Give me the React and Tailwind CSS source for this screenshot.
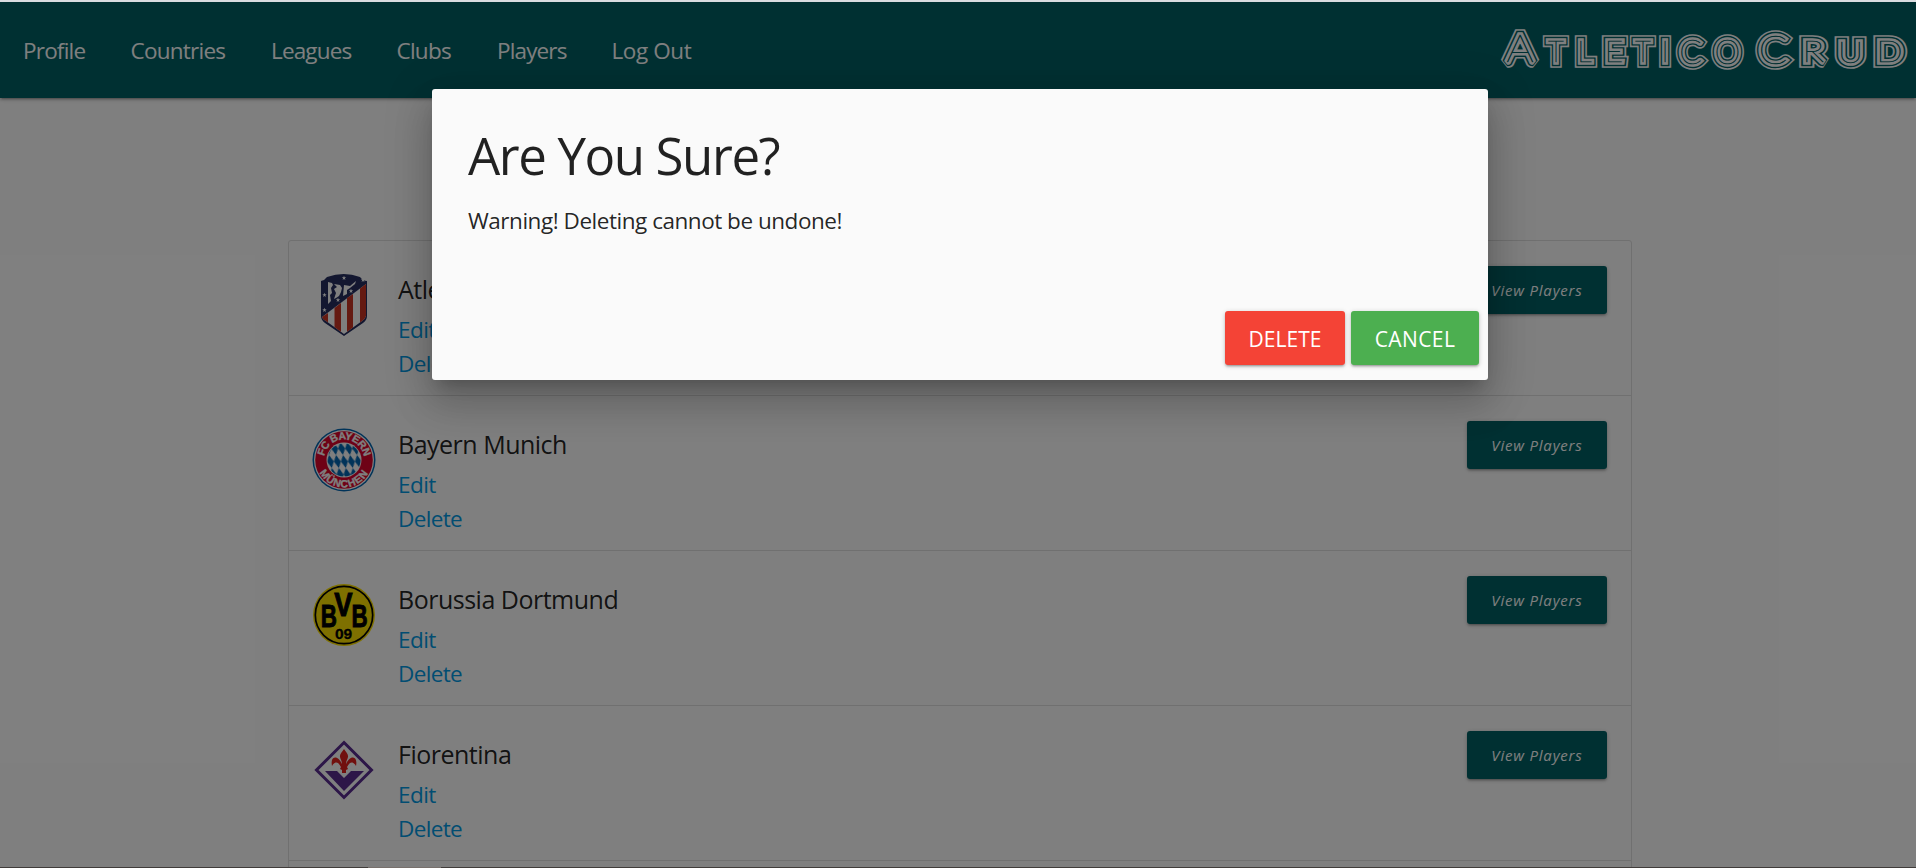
const NAV = [
  { label: "Profile", cls: "w-[62px] tracking-[-0.8px]" },
  { label: "Countries", cls: "w-[95px] tracking-[-0.75px]" },
  { label: "Leagues", cls: "w-[80px] tracking-[-0.85px]" },
  { label: "Clubs", cls: "w-[55px] tracking-[-0.75px]" },
  { label: "Players", cls: "w-[69px] tracking-[-0.85px]" },
  { label: "Log Out", cls: "w-[80px] tracking-[-0.4px]" },
];

// Centre x, baseline, size and horizontal stretch of each letter of the wordmark.
const LETTERS = [
  ["A", 1520, 62, 37, 1.17], ["T", 1556, 62, 29, 0.96], ["L", 1584.5, 62, 29, 1], ["E", 1614, 62, 29, 1.12],
  ["T", 1643, 62, 29, 0.96], ["I", 1665, 62, 29, 1], ["C", 1690.5, 63.5, 33, 1], ["O", 1727.5, 63.5, 33, 1],
  ["C", 1773, 63.5, 40, 1.06], ["R", 1813, 62, 29, 1.27], ["U", 1850.5, 62.5, 29.5, 1.2], ["D", 1889.5, 62, 29, 1.2],
];
const STROKES = [["#ffffff", 11.6], ["#006064", 8.4], ["#ffffff", 5.6], ["#006064", 0.5]];

function Wordmark() {
  return (
    <svg viewBox="1490 2 426 96" className="h-24 w-[426px] font-['Lato'] font-thin">
      {LETTERS.map(([ch, x, y, size, stretch], i) => (
        <g key={i} transform={`translate(${x} ${y}) scale(${stretch} 1)`} textAnchor="middle" fontSize={size} strokeMiterlimit="1.5">
          {STROKES.map(([color, width]) => (
            <text key={width} fill={color} stroke={color} strokeWidth={width}>{ch}</text>
          ))}
        </g>
      ))}
    </svg>
  );
}

const STAR = "M0 -2.3L.6 -.7L2.2 -.7L.9 .3L1.4 1.9L0 .9L-1.4 1.9L-.9 .3L-2.2 -.7L-.6 -.7Z";

function Atletico() {
  return (
    <svg viewBox="0 0 64 64" className="size-16">
      <defs>
        <clipPath id="shield"><path d="M10 9Q14 8 16 5Q32 -2 47 5Q50 9 54 9V43Q53 46 50 48L32 61L14 48Q10 46 10 43Z" /></clipPath>
      </defs>
      <path d="M9 8Q13 7 15 4Q32 -2 48 4Q51 8 55 8V43Q55 47 51 50L32 63L13 50Q9 47 9 43Z" fill="#262f61" />
      <g clipPath="url(#shield)">
        <path d="M10 44L54 11V64H10Z" fill="#fff" />
        <path d="M10 44L16 40V64H10ZM22.500 35L29 30V64H22.500ZM35 25L41 21V64H35ZM48 15.500L54 11V64H48Z" fill="#cb3524" />
      </g>
      <path d="M16 9L20 10L21 12L19 15L20 20L18 22L19 28L16 31ZM22 11L28 12L30 15L29 19L27 23L24 25L22 26L24 20L22 16L25 14ZM32 12L38 13L44 8L43 11L38 15L35 17L35 21L31 23Z" fill="#fff" />
      <g fill="#fff">
        <path d={STAR} transform="translate(32 5)" /><path d={STAR} transform="translate(51 7)" />
        <path d={STAR} transform="translate(39 18)" /><path d={STAR} transform="translate(26 27)" />
        <path d={STAR} transform="translate(12.500 22)" /><path d={STAR} transform="translate(12.500 37)" />
      </g>
    </svg>
  );
}

function Bayern() {
  return (
    <svg viewBox="0 0 64 64" className="size-16 font-['Liberation_Sans'] font-bold">
      <defs>
        <path id="bayern-top" d="M12.500 36A20 20 0 1 1 51.500 36" />
        <path id="bayern-bottom" d="M4.600 32A27.400 27.400 0 0 0 59.400 32" />
        <clipPath id="bayern-core"><circle cx="32" cy="32" r="16.600" /></clipPath>
        <pattern id="lozenge" width="7" height="13" patternUnits="userSpaceOnUse" patternTransform="translate(1 1) skewX(12)">
          <path d="M3.500 0L7 6.500L3.500 13L0 6.500Z" fill="#0066b2" />
        </pattern>
      </defs>
      <circle cx="32" cy="32" r="31.500" fill="#0066b2" />
      <circle cx="32" cy="32" r="30" fill="#fff" />
      <circle cx="32" cy="32" r="28.800" fill="#dc052d" />
      <circle cx="32" cy="32" r="17.500" fill="#fff" />
      <rect width="64" height="64" fill="url(#lozenge)" clipPath="url(#bayern-core)" />
      <g fill="#fff" stroke="#fff" strokeWidth="0.300" fontSize="10.500" textAnchor="middle">
        <text letterSpacing="-0.500"><textPath href="#bayern-top" startOffset="50%">FC BAYERN</textPath></text>
        <text letterSpacing="0.900"><textPath href="#bayern-bottom" startOffset="50%">MÜNCHEN</textPath></text>
      </g>
    </svg>
  );
}

function Dortmund() {
  return (
    <svg viewBox="0 0 64 64" className="size-16 font-['Liberation_Sans'] font-bold">
      <circle cx="32" cy="32" r="31" fill="#fde100" />
      <circle cx="32" cy="32" r="28.700" fill="none" stroke="#000" strokeWidth="1.700" />
      <g textAnchor="middle" stroke="#000" strokeWidth="1">
        <text transform="translate(16.800 43.700) scale(.7 1)" fontSize="32">B</text>
        <text transform="translate(31.500 32.500) scale(.83 1)" fontSize="33">V</text>
        <text transform="translate(47.500 43.700) scale(.7 1)" fontSize="32">B</text>
        <text x="31.500" y="56" fontSize="15.500" strokeWidth="0.300">09</text>
      </g>
    </svg>
  );
}

function Fiorentina() {
  return (
    <svg viewBox="0 0 64 64" className="size-16">
      <path d="M32 4.500L59.500 32L32 59.500L4.500 32Z" fill="#fff" stroke="#5a2d91" strokeWidth="3" />
      <path d="M13 33H25L32 40L39 33H52L32 53Z" fill="#5a2d91" />
      <path d="M32 11C34 14 36.500 16 36 19C35.500 21.500 34 23 34 26C36 22 38 19.500 41 19.500C44 20 45 23 44 28C42.500 25 40 23.500 38 25C36.500 26 36 28 35 29L36 31L34 32V35H30V32L28 31L29 29C28 28 27.500 26 26 25C24 23.500 21.500 25 20 28C19 23 20 20 23 19.500C26 19.500 28 22 30 26C30 23 28.500 21.500 28 19C27.500 16 30 14 32 11Z" fill="#e2211c" />
    </svg>
  );
}

const CLUBS = [
  { name: "Atletico Madrid", Crest: Atletico },
  { name: "Bayern Munich", Crest: Bayern },
  { name: "Borussia Dortmund", Crest: Dortmund },
  { name: "Fiorentina", Crest: Fiorentina },
];

const SHADOW = "shadow-[0_2px_2px_0_rgba(0,0,0,0.14),0_3px_1px_-2px_rgba(0,0,0,0.12),0_1px_5px_0_rgba(0,0,0,0.2)]";

function ClubRow({ name, Crest }) {
  return (
    <li className="flex h-[155px] items-start border-b border-[#e0e0e0] pl-[23px] pr-6">
      <div className="mt-8 shrink-0"><Crest /></div>
      <div className="ml-[22px] grow text-[22.500px] leading-[34px]">
        <div className="mt-[30px] mb-[5px] text-[25px] leading-[37px] tracking-[-0.5px] text-black/87">{name}</div>
        <div className="tracking-[-0.55px] text-[#039be5]">Edit</div>
        <div className="tracking-[-0.65px] text-[#039be5]">Delete</div>
      </div>
      <button className={`mt-[25px] h-12 w-[140px] rounded-[3px] bg-[#006064] text-[15px] italic tracking-[0.8px] text-white ${SHADOW}`}>View Players</button>
    </li>
  );
}

export default function App() {
  return (
    <div className="relative flex h-[868px] w-[1916px] flex-col overflow-hidden bg-white font-['Open_Sans',sans-serif]">
      <div className="h-0.5 shrink-0 bg-white" />
      <header className={`flex h-24 shrink-0 items-center justify-between bg-[#006064] pl-[23px] text-white ${SHADOW}`}>
        <nav className="flex gap-[45.500px] pt-px text-[22.500px]">
          {NAV.map((n) => <a key={n.label} className={`whitespace-nowrap ${n.cls}`}>{n.label}</a>)}
        </nav>
        <Wordmark />
      </header>
      <ul className="ml-[288px] mt-[142px] h-[700px] w-[1344px] rounded-t-[3px] border border-[#e0e0e0]">
        {CLUBS.map((c) => <ClubRow key={c.name} {...c} />)}
      </ul>

      <div className="absolute inset-0 flex flex-col bg-black/50">
        <div className="h-0.5 shrink-0 bg-[#dadce0]" />
        <section className="ml-[432px] mt-[87px] flex h-[291px] w-[1056px] flex-col rounded-[3px] bg-[#fafafa] shadow-[0_24px_38px_3px_rgba(0,0,0,0.14),0_9px_46px_8px_rgba(0,0,0,0.12),0_11px_15px_-7px_rgba(0,0,0,0.2)]">
          <div className="grow px-9 pt-[37px] text-black/87">
            <h4 className="text-[51px] leading-[58px] tracking-[-1.4px]">Are You Sure?</h4>
            <p className="mt-5 text-[22.500px] leading-[34px] tracking-[-0.47px]">Warning! Deleting cannot be undone!</p>
          </div>
          <footer className="flex justify-end gap-1.5 pb-[15px] pr-[9px] text-[21px] text-white">
            <button className={`h-[54px] w-[120px] rounded-[3px] bg-[#f44336] pt-[3px] ${SHADOW}`}>DELETE</button>
            <button className={`h-[54px] w-32 rounded-[3px] bg-[#4caf50] pt-[3px] tracking-[0.4px] ${SHADOW}`}>CANCEL</button>
          </footer>
        </section>
        <div className="mt-auto flex h-px bg-[#403c3a]"><div className="ml-[368px] w-[73px] bg-[#77706c]" /></div>
      </div>
    </div>
  );
}
